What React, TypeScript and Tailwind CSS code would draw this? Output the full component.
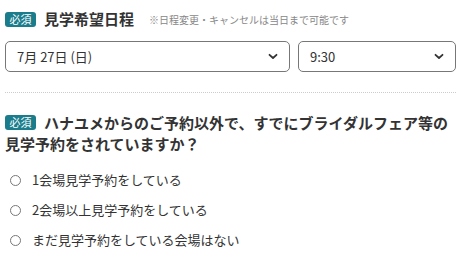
import React from "react";

const font = { fontFamily: '"Noto Sans CJK JP", "Noto Sans", sans-serif' };

function Badge({ className = "" }: { className?: string }) {
  return (
    <span className={`inline-flex h-[15px] w-[31px] shrink-0 items-center justify-center rounded-[3px] bg-[#1b7d8c] text-[11px] font-normal leading-none text-white ${className}`}>
      必須
    </span>
  );
}

function Chevron() {
  return (
    <svg width="10" height="7" viewBox="0 0 10 7" className="shrink-0">
      <path d="M1.5 1.8 L5 5 L8.5 1.8" fill="none" stroke="#333" strokeWidth="1.8" strokeLinecap="round" strokeLinejoin="round" />
    </svg>
  );
}

function Select({ value, className }: { value: string; className: string }) {
  return (
    <div className={`flex h-[31px] items-center justify-between rounded-[5px] border border-[#777] pl-[11px] pr-[11px] text-[13px] text-[#333] ${className}`}>
      <span>{value}</span>
      <Chevron />
    </div>
  );
}

function Radio({ label }: { label: string }) {
  return (
    <div className="flex h-[30px] items-center">
      <span className="ml-[5px] mr-[11px] box-border h-[11px] w-[11px] rounded-full border border-[#777]" />
      <span className="text-[13px] text-[#333]">{label}</span>
    </div>
  );
}

export default function App() {
  return (
    <div className="h-[259px] w-[465px] overflow-hidden bg-white pl-[5px] pr-[9px]" style={font}>
      <div className="flex h-[37px] items-center pt-[1px]">
        <Badge />
        <span className="ml-[8px] text-[15px] font-bold text-[#333]">見学希望日程</span>
        <span className="ml-[15px] text-[10px] text-[#888]">※日程変更・キャンセルは当日まで可能です</span>
      </div>
      <div className="mt-[4px] flex gap-[8px]">
        <Select value="7月 27日 (日)" className="w-[285px]" />
        <Select value="9:30" className="w-[158px]" />
      </div>
      <div className="mt-[20px] border-t border-dotted border-[#ccc]" />
      <div className="mt-[19px] text-[15px] font-bold leading-[21px] text-[#333]">
        <div className="flex items-center">
          <Badge className="mr-[8px]" />
          <span className="whitespace-nowrap">ハナユメからのご予約以外で、すでにブライダルフェア等の</span>
        </div>
        <div>見学予約をされていますか？</div>
      </div>
      <div className="mt-[11px]">
        <Radio label="1会場見学予約をしている" />
        <Radio label="2会場以上見学予約をしている" />
        <Radio label="まだ見学予約をしている会場はない" />
      </div>
    </div>
  );
}
